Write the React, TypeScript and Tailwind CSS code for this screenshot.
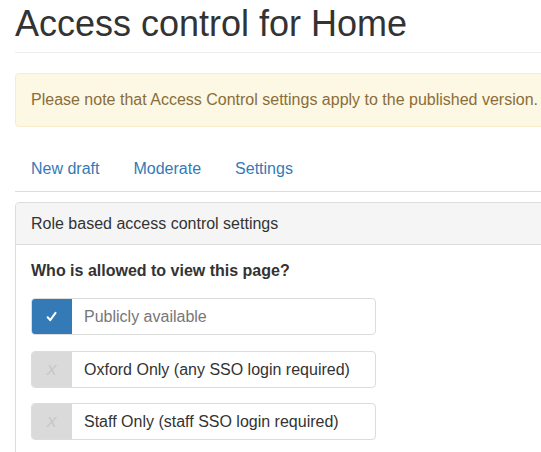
import React from "react";

function Row({ checked, label, muted }: { checked: boolean; label: string; muted?: boolean }) {
  return (
    <div className="flex h-[37px] w-[345px] rounded-[4px] border border-[#dcdcdc] overflow-hidden">
      <div
        className={
          checked
            ? "w-[41px] -my-px -ml-px h-[37px] bg-[#337ab7] rounded-l-[4px] flex items-center justify-center shrink-0"
            : "w-[41px] -my-px -ml-px h-[37px] bg-[#dadada] rounded-l-[4px] flex items-center justify-center shrink-0"
        }
      >
        {checked ? (
          <svg width="11" height="11" viewBox="0 0 12 12">
            <path d="M1.8 6.8 L4.6 10 L10.4 2" stroke="#fff" strokeWidth="2.2" fill="none" strokeLinecap="round" strokeLinejoin="round" />
          </svg>
        ) : (
          <span className="text-[15px] text-[#c6c6c6] leading-none italic">X</span>
        )}
      </div>
      <div className={muted ? "pl-[12px] flex items-center text-[16px] text-[#777]" : "pl-[12px] flex items-center text-[16px] text-[#333]"}>
        {label}
      </div>
    </div>
  );
}

export default function App() {
  return (
    <div className="w-[541px] h-[452px] overflow-hidden bg-white" style={{ fontFamily: '"Liberation Sans", Arial, sans-serif' }}>
      <div className="pl-[15px] w-[600px]">
        <div className="border-b border-[#eee] h-[53px]">
          <h1 className="text-[36px] leading-[42px] pt-[3px] text-[#333] font-normal">Access control for Home</h1>
        </div>
        <div className="mt-[20px] h-[54px] bg-[#fcf8e3] border border-[#faebcc] rounded-[4px] px-[15px] flex items-center text-[16px] text-[#8a6d3b]">
          Please note that Access Control settings apply to the published version.
        </div>
        <div className="mt-[21px] flex border-b border-[#ddd] text-[16px] text-[#337ab7]">
          <span className="pl-[16px] pr-[18px] pt-[10px] pb-[11px] leading-[22px]">New draft</span>
          <span className="pl-[16px] pr-[18px] pt-[10px] pb-[11px] leading-[22px]">Moderate</span>
          <span className="px-[16px] pt-[10px] pb-[11px] leading-[22px]">Settings</span>
        </div>
        <div className="mt-[10px] border border-[#ddd] rounded-[4px]">
          <div className="bg-[#f5f5f5] border-b border-[#ddd] px-[15px] pt-[10px] pb-[9px] leading-[22px] text-[16px] text-[#333] rounded-t-[4px]">
            Role based access control settings
          </div>
          <div className="px-[15px] pt-[15px]">
            <div className="font-bold text-[16px] leading-[22px] text-[#333] mb-[16px]">Who is allowed to view this page?</div>
            <div className="flex flex-col">
              <div className="mb-[16px]"><Row checked label="Publicly available" muted /></div>
              <div className="mb-[15px]"><Row checked={false} label="Oxford Only (any SSO login required)" /></div>
              <div className="mb-[15px]"><Row checked={false} label="Staff Only (staff SSO login required)" /></div>
            </div>
          </div>
        </div>
      </div>
    </div>
  );
}
